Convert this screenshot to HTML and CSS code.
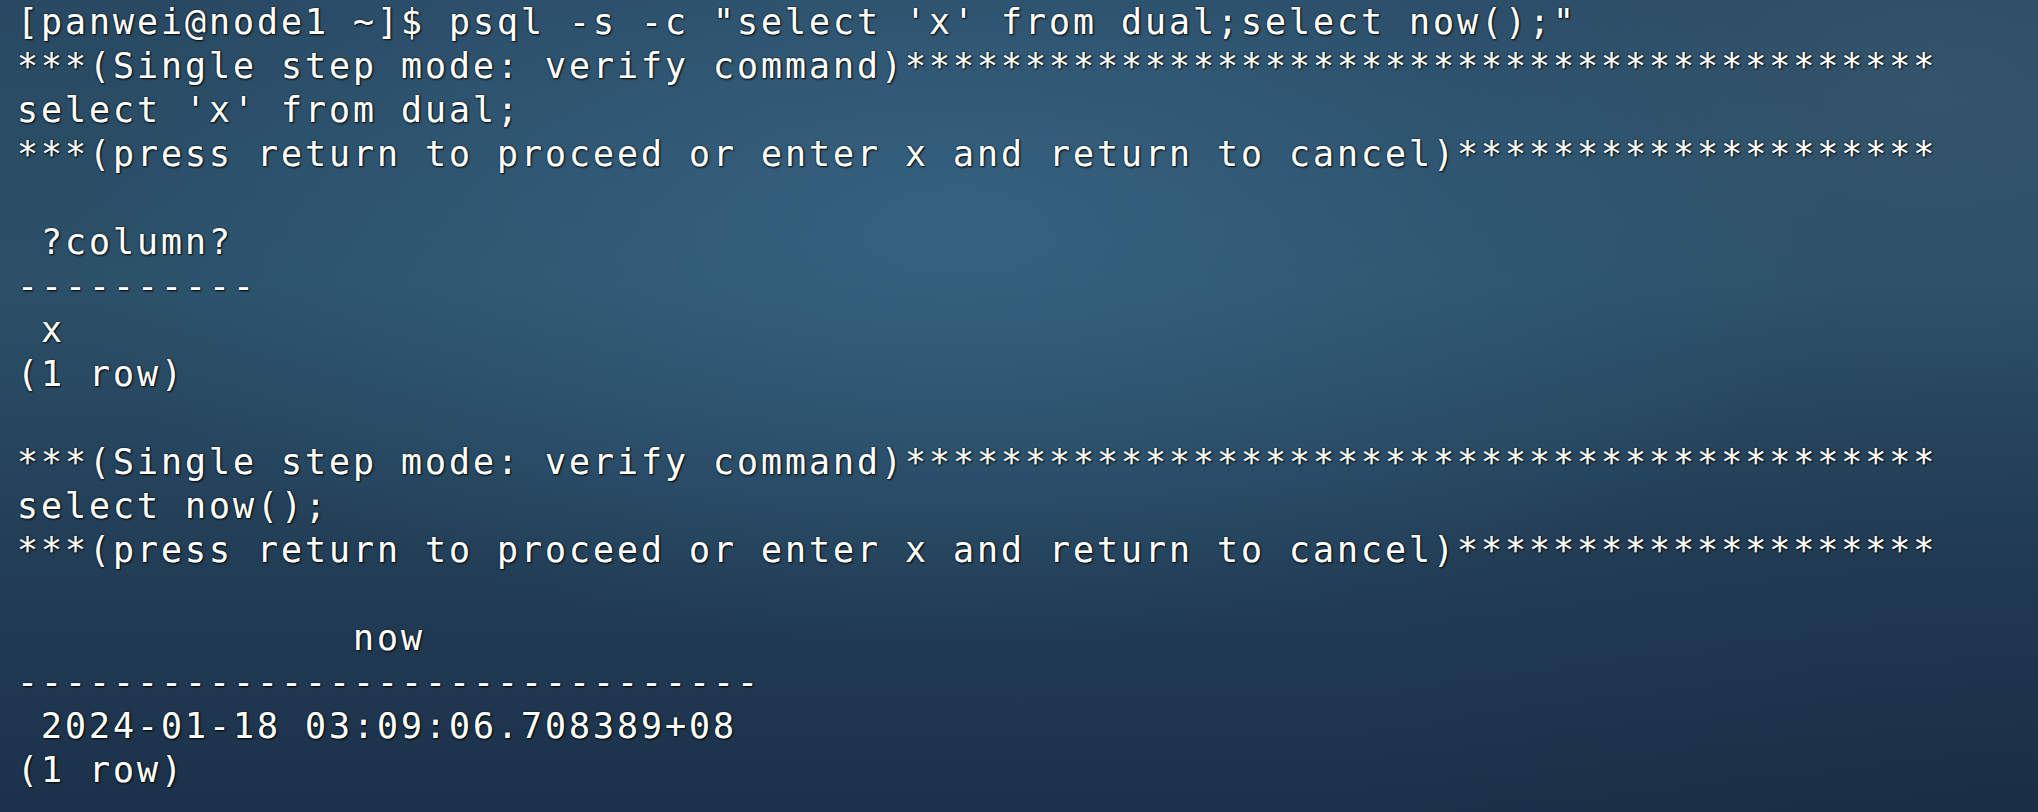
FILE: index.html
```html
<!DOCTYPE html>
<html>
<head>
<meta charset="utf-8">
<link rel="stylesheet" href="styles.css">
</head>
<body>
<main class="terminal">
<pre class="output">[panwei@node1 ~]$ psql -s -c "select 'x' from dual;select now();"
***(Single step mode: verify command)*******************************************
select 'x' from dual;
***(press return to proceed or enter x and return to cancel)********************

 ?column?
----------
 x
(1 row)

***(Single step mode: verify command)*******************************************
select now();
***(press return to proceed or enter x and return to cancel)********************

              now
-------------------------------
 2024-01-18 03:09:06.708389+08
(1 row)
</pre>
</main>
</body>
</html>
```
FILE: styles.css
```css
html, body {
  margin: 0;
  padding: 0;
  width: 2038px;
  height: 812px;
  overflow: hidden;
}

.terminal {
  width: 2038px;
  height: 812px;
  box-sizing: border-box;
  padding: 0 0 0 17px;
  background:
    radial-gradient(ellipse 900px 420px at 47% 28%, rgba(58, 106, 138, 0.7), rgba(58, 106, 138, 0) 100%),
    radial-gradient(ellipse 500px 300px at 95% 10%, rgba(70, 100, 120, 0.35), rgba(70, 100, 120, 0) 100%),
    radial-gradient(ellipse 700px 500px at 100% 100%, rgba(20, 40, 60, 0.3), rgba(20, 40, 60, 0) 100%),
    linear-gradient(180deg, #294963 0%, #2b5068 35%, #223d56 70%, #1b3149 100%);
}

.output {
  margin: 0;
  font-family: "DejaVu Sans Mono", monospace;
  font-size: 35px;
  line-height: 44px;
  letter-spacing: 2.93px;
  color: #ffffff;
  text-shadow: 1px 1px 2px rgba(0, 0, 0, 0.9), 0 0 2px rgba(0, 0, 0, 0.7), 0 0 0.4px #ffffff;
  white-space: pre;
}
```
